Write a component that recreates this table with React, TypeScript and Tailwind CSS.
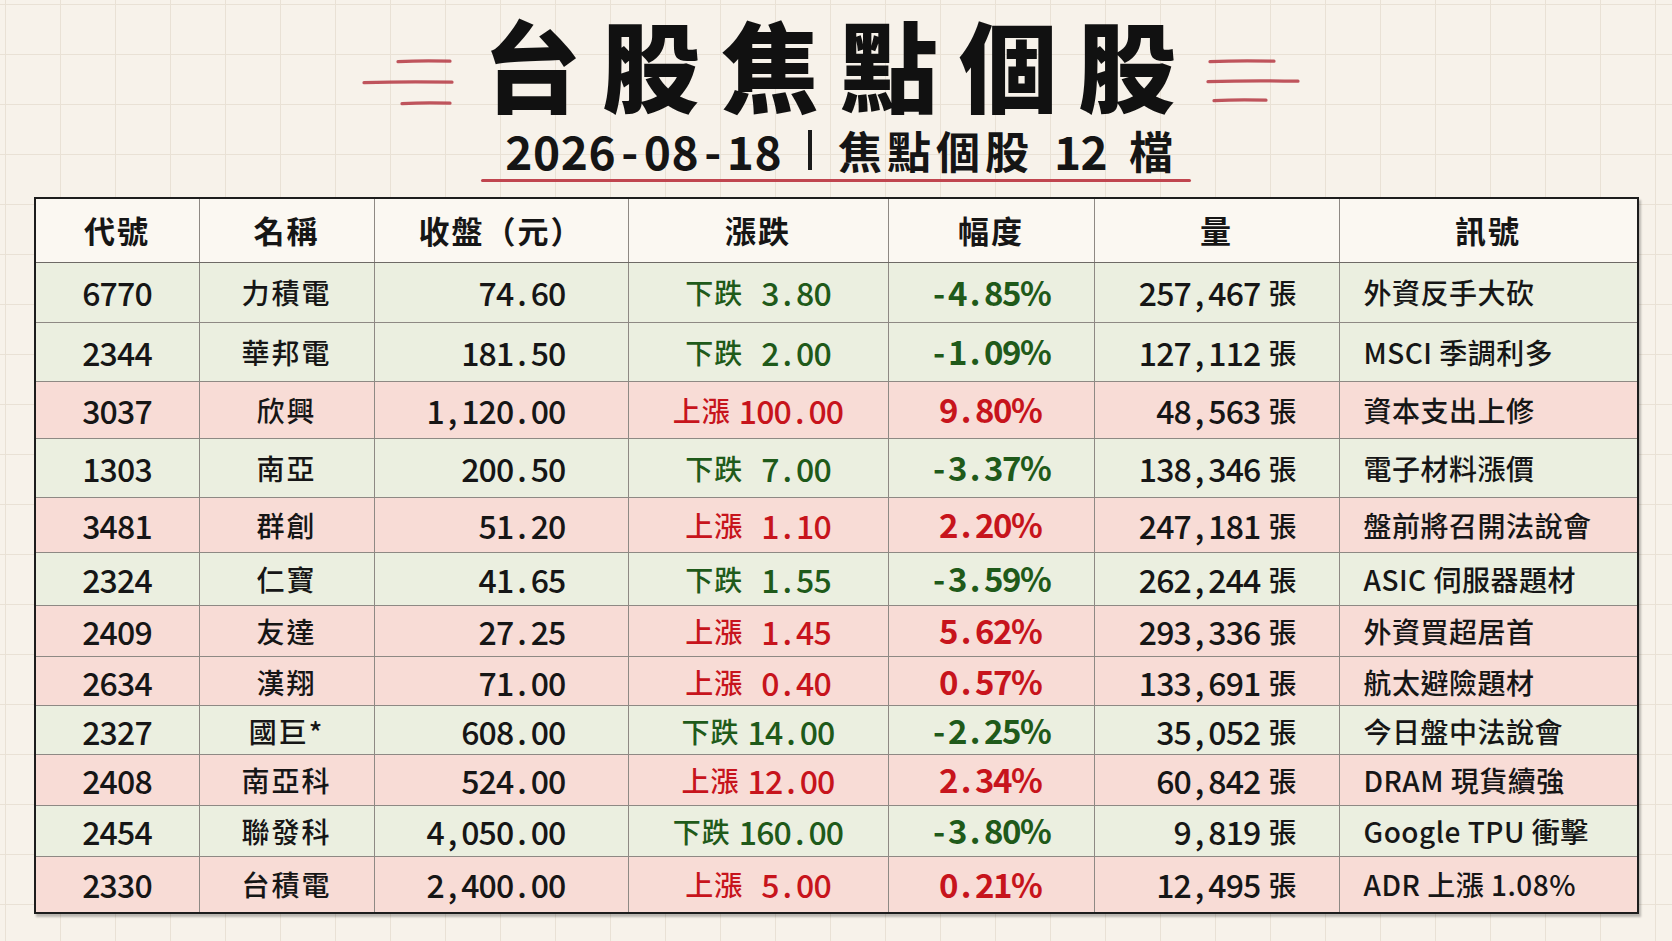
import React from "react";

type Row = [string, string, string, "up" | "down", string, string, string, string, string];

const rows: Row[] = [
  ["6770", "力積電", "74.60", "down", "3.80", "-4.85", "257,467", "外資反手大砍", "h-[60px]"],
  ["2344", "華邦電", "181.50", "down", "2.00", "-1.09", "127,112", "MSCI 季調利多", "h-[59px]"],
  ["3037", "欣興", "1,120.00", "up", "100.00", "9.80", "48,563", "資本支出上修", "h-[57px]"],
  ["1303", "南亞", "200.50", "down", "7.00", "-3.37", "138,346", "電子材料漲價", "h-[59px]"],
  ["3481", "群創", "51.20", "up", "1.10", "2.20", "247,181", "盤前將召開法說會", "h-[55px]"],
  ["2324", "仁寶", "41.65", "down", "1.55", "-3.59", "262,244", "ASIC 伺服器題材", "h-[53px]"],
  ["2409", "友達", "27.25", "up", "1.45", "5.62", "293,336", "外資買超居首", "h-[51px]"],
  ["2634", "漢翔", "71.00", "up", "0.40", "0.57", "133,691", "航太避險題材", "h-[49px]"],
  ["2327", "國巨*", "608.00", "down", "14.00", "-2.25", "35,052", "今日盤中法說會", "h-[49px]"],
  ["2408", "南亞科", "524.00", "up", "12.00", "2.34", "60,842", "DRAM 現貨續強", "h-[51px]"],
  ["2454", "聯發科", "4,050.00", "down", "160.00", "-3.80", "9,819", "Google TPU 衝擊", "h-[51px]"],
  ["2330", "台積電", "2,400.00", "up", "5.00", "0.21", "12,495", "ADR 上漲 1.08%", "h-[55px]"],
];

const headers = ["代號", "名稱", "收盤（元）", "漲跌", "幅度", "量", "訊號"];

function Mono({ text, w }: { text: string; w: string }) {
  return (
    <span className="inline-flex">
      {text.split("").map((c, i) => (
        <span key={i} className={`inline-block text-center ${w}`}>
          {c}
        </span>
      ))}
    </span>
  );
}

function Dashes({ side }: { side: "left" | "right" }) {
  const lines =
    side === "left"
      ? [
          { x1: 36, x2: 88, y: 5 },
          { x1: 2, x2: 90, y: 26 },
          { x1: 40, x2: 88, y: 47 },
        ]
      : [
          { x1: 4, x2: 68, y: 4 },
          { x1: 2, x2: 92, y: 24 },
          { x1: 8, x2: 60, y: 43 },
        ];
  return (
    <svg width="94" height="52" viewBox="0 0 94 52" className="shrink-0">
      {lines.map((l, i) => (
        <path
          key={i}
          d={`M${l.x1} ${l.y + 0.6} Q ${(l.x1 + l.x2) / 2} ${l.y - 0.8} ${l.x2} ${l.y + 0.2}`}
          stroke="#b8434c"
          strokeWidth="3.2"
          strokeLinecap="round"
          fill="none"
          opacity="0.9"
        />
      ))}
    </svg>
  );
}

const cols = "grid grid-cols-[164px_175px_254px_260px_206px_245px_297px]";
const line = "border-[#8e8984]";

export default function App() {
  const font = "font-['Noto_Sans_CJK_TC','Noto_Sans_CJK_SC',sans-serif]";
  return (
    <div
      className={`w-[1672px] h-[941px] overflow-hidden bg-[#f7f2ea] bg-[linear-gradient(to_right,#e9e1d5_1px,transparent_1px),linear-gradient(to_bottom,#e9e1d5_1px,transparent_1px)] bg-[size:55px_50px] bg-[position:5px_4px] flex flex-col items-center text-[#161616] ${font}`}
    >
      {/* Title */}
      <div className="mt-[9px] flex items-start ml-[-10px]">
        <div className="mt-[47px] mr-[6px]">
          <Dashes side="left" />
        </div>
        <div className="text-[98px] leading-[1.1] font-black tracking-[21px] pl-[21px] text-[#111]">
          台股焦點個股
        </div>
        <div className="mt-[48px] ml-[9px]">
          <Dashes side="right" />
        </div>
      </div>

      {/* Subtitle */}
      <div className="mt-[8px] h-[50px] flex items-center font-bold text-[#151515] ml-[6px]">
        <span className="text-[46px] leading-none">
          <Mono text="2026-08-18" w="w-[27.7px]" />
        </span>
        <span className="mx-[26px] inline-block w-[4px] h-[40px] bg-[#1a1a1a]" />
        <span className="text-[44px] leading-none tracking-[5px]">焦點個股</span>
        <span className="ml-[20px] text-[46px] leading-none">
          <Mono text="12" w="w-[26.5px]" />
        </span>
        <span className="ml-[22px] text-[44px] leading-none">檔</span>
      </div>
      <div className="mt-[4px] w-[710px] h-[3px] rounded-full bg-[#c0454f]" />

      {/* Table */}
      <div className="mt-[15px] w-[1605px] border-2 border-[#1d1d1d] shadow-[2px_3px_2px_rgba(0,0,0,0.25)]">
        <div className={`${cols} h-[64px] bg-[#fbf8f2] border-b border-[#6e6a66]`}>
          {headers.map((h, i) => (
            <div
              key={h}
              className={`flex items-center justify-center text-[31px] font-bold tracking-[2px] ${
                i < 6 ? `border-r ${line}` : ""
              }`}
            >
              {h}
            </div>
          ))}
        </div>
        {rows.map((r, idx) => {
          const up = r[3] === "up";
          const color = up ? "text-[#c7141c]" : "text-[#1f5a1a]";
          return (
            <div
              key={r[0]}
              className={`${cols} ${r[8]} ${up ? "bg-[#f8dcd6]" : "bg-[#ebefe0]"} ${
                idx < rows.length - 1 ? `border-b ${line}` : ""
              }`}
            >
              <div className={`flex items-center justify-center text-[32px] font-medium border-r ${line}`}>
                <Mono text={r[0]} w="w-[17.4px]" />
              </div>
              <div className={`flex items-center justify-center text-[28px] font-medium tracking-[2px] border-r ${line}`}>
                {r[1]}
              </div>
              <div className={`flex items-center justify-end pr-[62px] text-[32px] font-medium border-r ${line}`}>
                <Mono text={r[2]} w="w-[17.4px]" />
              </div>
              <div className={`flex items-center justify-center border-r ${line} ${color}`}>
                <span className="text-[28px] font-medium tracking-[1px]">{up ? "上漲" : "下跌"}</span>
                <span className={`text-[32px] font-medium ${r[4].length <= 4 ? "ml-[18px]" : "ml-[8px]"}`}>
                  <Mono text={r[4]} w="w-[17.4px]" />
                </span>
              </div>
              <div className={`flex items-center justify-center text-[33px] font-semibold border-r ${line} ${color}`}>
                <Mono text={r[5]} w="w-[18px]" />
                <span>%</span>
              </div>
              <div className={`flex items-center justify-end pr-[42px] text-[32px] font-medium border-r ${line}`}>
                <Mono text={r[6]} w="w-[17.4px]" />
                <span className="ml-[8px] text-[28px] font-medium">張</span>
              </div>
              <div className="flex items-center justify-start pl-[24px] text-[28px] font-medium tracking-[0.5px]">
                {r[7]}
              </div>
            </div>
          );
        })}
      </div>
    </div>
  );
}
